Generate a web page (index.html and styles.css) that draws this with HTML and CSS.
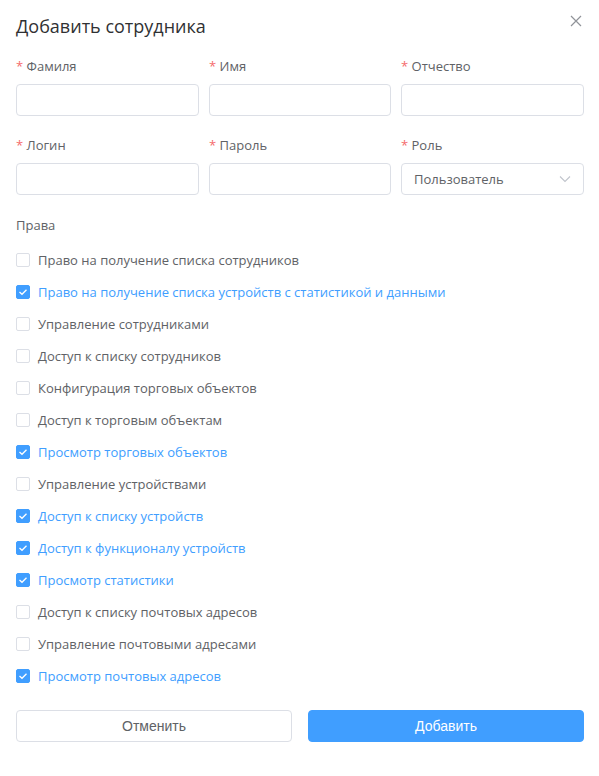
FILE: index.html
```html
<!DOCTYPE html>
<html lang="ru">
<head>
<meta charset="utf-8">
<link rel="stylesheet" href="styles.css">
</head>
<body>
<div class="dialog">
  <div class="header">
    <span class="title">Добавить сотрудника</span>
    <svg class="close" width="12" height="12" viewBox="0 0 12 12"><path d="M1 1L11 11M11 1L1 11" stroke="#909399" stroke-width="1.2" fill="none"/></svg>
  </div>
  <div class="grid">
    <div class="field"><div class="label"><span class="req">*</span> Фамиля</div><div class="input"></div></div>
    <div class="field"><div class="label"><span class="req">*</span> Имя</div><div class="input"></div></div>
    <div class="field"><div class="label"><span class="req">*</span> Отчество</div><div class="input"></div></div>
    <div class="field"><div class="label"><span class="req">*</span> Логин</div><div class="input"></div></div>
    <div class="field"><div class="label"><span class="req">*</span> Пароль</div><div class="input"></div></div>
    <div class="field"><div class="label"><span class="req">*</span> Роль</div>
      <div class="input select"><span>Пользователь</span>
        <svg width="12" height="8" viewBox="0 0 12 8"><path d="M1 1.5L6 6.5L11 1.5" stroke="#c0c4cc" stroke-width="1.1" fill="none"/></svg>
      </div>
    </div>
  </div>
  <div class="section">Права</div>
  <div class="checks">
    <div class="check"><span class="box"></span><span>Право на получение списка сотрудников</span></div>
    <div class="check on"><span class="box"><svg width="10" height="8" viewBox="0 0 10 8"><path d="M1.5 4L4 6.3L8.5 1.7" stroke="#fff" stroke-width="1.3" fill="none"/></svg></span><span>Право на получение списка устройств с статистикой и данными</span></div>
    <div class="check"><span class="box"></span><span>Управление сотрудниками</span></div>
    <div class="check"><span class="box"></span><span>Доступ к списку сотрудников</span></div>
    <div class="check"><span class="box"></span><span>Конфигурация торговых объектов</span></div>
    <div class="check"><span class="box"></span><span>Доступ к торговым объектам</span></div>
    <div class="check on"><span class="box"><svg width="10" height="8" viewBox="0 0 10 8"><path d="M1.5 4L4 6.3L8.5 1.7" stroke="#fff" stroke-width="1.3" fill="none"/></svg></span><span>Просмотр торговых объектов</span></div>
    <div class="check"><span class="box"></span><span>Управление устройствами</span></div>
    <div class="check on"><span class="box"><svg width="10" height="8" viewBox="0 0 10 8"><path d="M1.5 4L4 6.3L8.5 1.7" stroke="#fff" stroke-width="1.3" fill="none"/></svg></span><span>Доступ к списку устройств</span></div>
    <div class="check on"><span class="box"><svg width="10" height="8" viewBox="0 0 10 8"><path d="M1.5 4L4 6.3L8.5 1.7" stroke="#fff" stroke-width="1.3" fill="none"/></svg></span><span>Доступ к функционалу устройств</span></div>
    <div class="check on"><span class="box"><svg width="10" height="8" viewBox="0 0 10 8"><path d="M1.5 4L4 6.3L8.5 1.7" stroke="#fff" stroke-width="1.3" fill="none"/></svg></span><span>Просмотр статистики</span></div>
    <div class="check"><span class="box"></span><span>Доступ к списку почтовых адресов</span></div>
    <div class="check"><span class="box"></span><span>Управление почтовыми адресами</span></div>
    <div class="check on"><span class="box"><svg width="10" height="8" viewBox="0 0 10 8"><path d="M1.5 4L4 6.3L8.5 1.7" stroke="#fff" stroke-width="1.3" fill="none"/></svg></span><span>Просмотр почтовых адресов</span></div>
  </div>
  <div class="buttons">
    <button class="btn">Отменить</button>
    <button class="btn primary">Добавить</button>
  </div>
</div>
</body>
</html>
```
FILE: styles.css
```css
html, body {
  margin: 0;
  padding: 0;
  background: #ffffff;
}
body {
  font-family: "Open Sans", "Noto Sans", sans-serif;
  color: #606266;
}
.dialog {
  width: 599px;
  height: 776px;
  box-sizing: border-box;
  padding: 14px 15px 0 16px;
  background: #fff;
}
.header {
  display: flex;
  justify-content: space-between;
  align-items: center;
  height: 24px;
}
.title {
  font-size: 18px;
  color: #303133;
  line-height: 24px;
}
.close {
  margin-right: 2px;
  margin-top: -11px;
}
.grid {
  display: grid;
  grid-template-columns: 183px 182px 183px;
  column-gap: 10px;
  row-gap: 19px;
  margin-top: 18px;
}
.label {
  font-size: 13px;
  line-height: 20px;
  height: 20px;
  margin-bottom: 8px;
  color: #606266;
}
.req {
  color: #f56c6c;
}
.input {
  height: 32px;
  box-sizing: border-box;
  border: 1px solid #dcdfe6;
  border-radius: 4px;
  background: #fff;
}
.select {
  display: flex;
  align-items: center;
  justify-content: space-between;
  padding: 0 12px 0 12px;
  font-size: 13px;
  color: #606266;
}
.section {
  margin-top: 20px;
  font-size: 13px;
  line-height: 20px;
}
.checks {
  margin-top: 9px;
  display: flex;
  flex-direction: column;
}
.check {
  display: flex;
  align-items: center;
  height: 32px;
  font-size: 13px;
  color: #606266;
}
.check.on {
  color: #409eff;
}
.box {
  width: 14px;
  height: 14px;
  box-sizing: border-box;
  border: 1px solid #dcdfe6;
  border-radius: 2px;
  margin-right: 8px;
  display: flex;
  align-items: center;
  justify-content: center;
  background: #fff;
}
.check.on .box {
  background: #409eff;
  border-color: #409eff;
}
.buttons {
  display: grid;
  grid-template-columns: 276px 276px;
  column-gap: 16px;
  margin-top: 18px;
}
.btn {
  height: 32px;
  border: 1px solid #dcdfe6;
  border-radius: 4px;
  background: #fff;
  font-family: "Liberation Sans", Arial, sans-serif;
  font-size: 14px;
  color: #606266;
  padding: 0;
}
.btn.primary {
  background: #409eff;
  border-color: #409eff;
  color: #fff;
}
```
